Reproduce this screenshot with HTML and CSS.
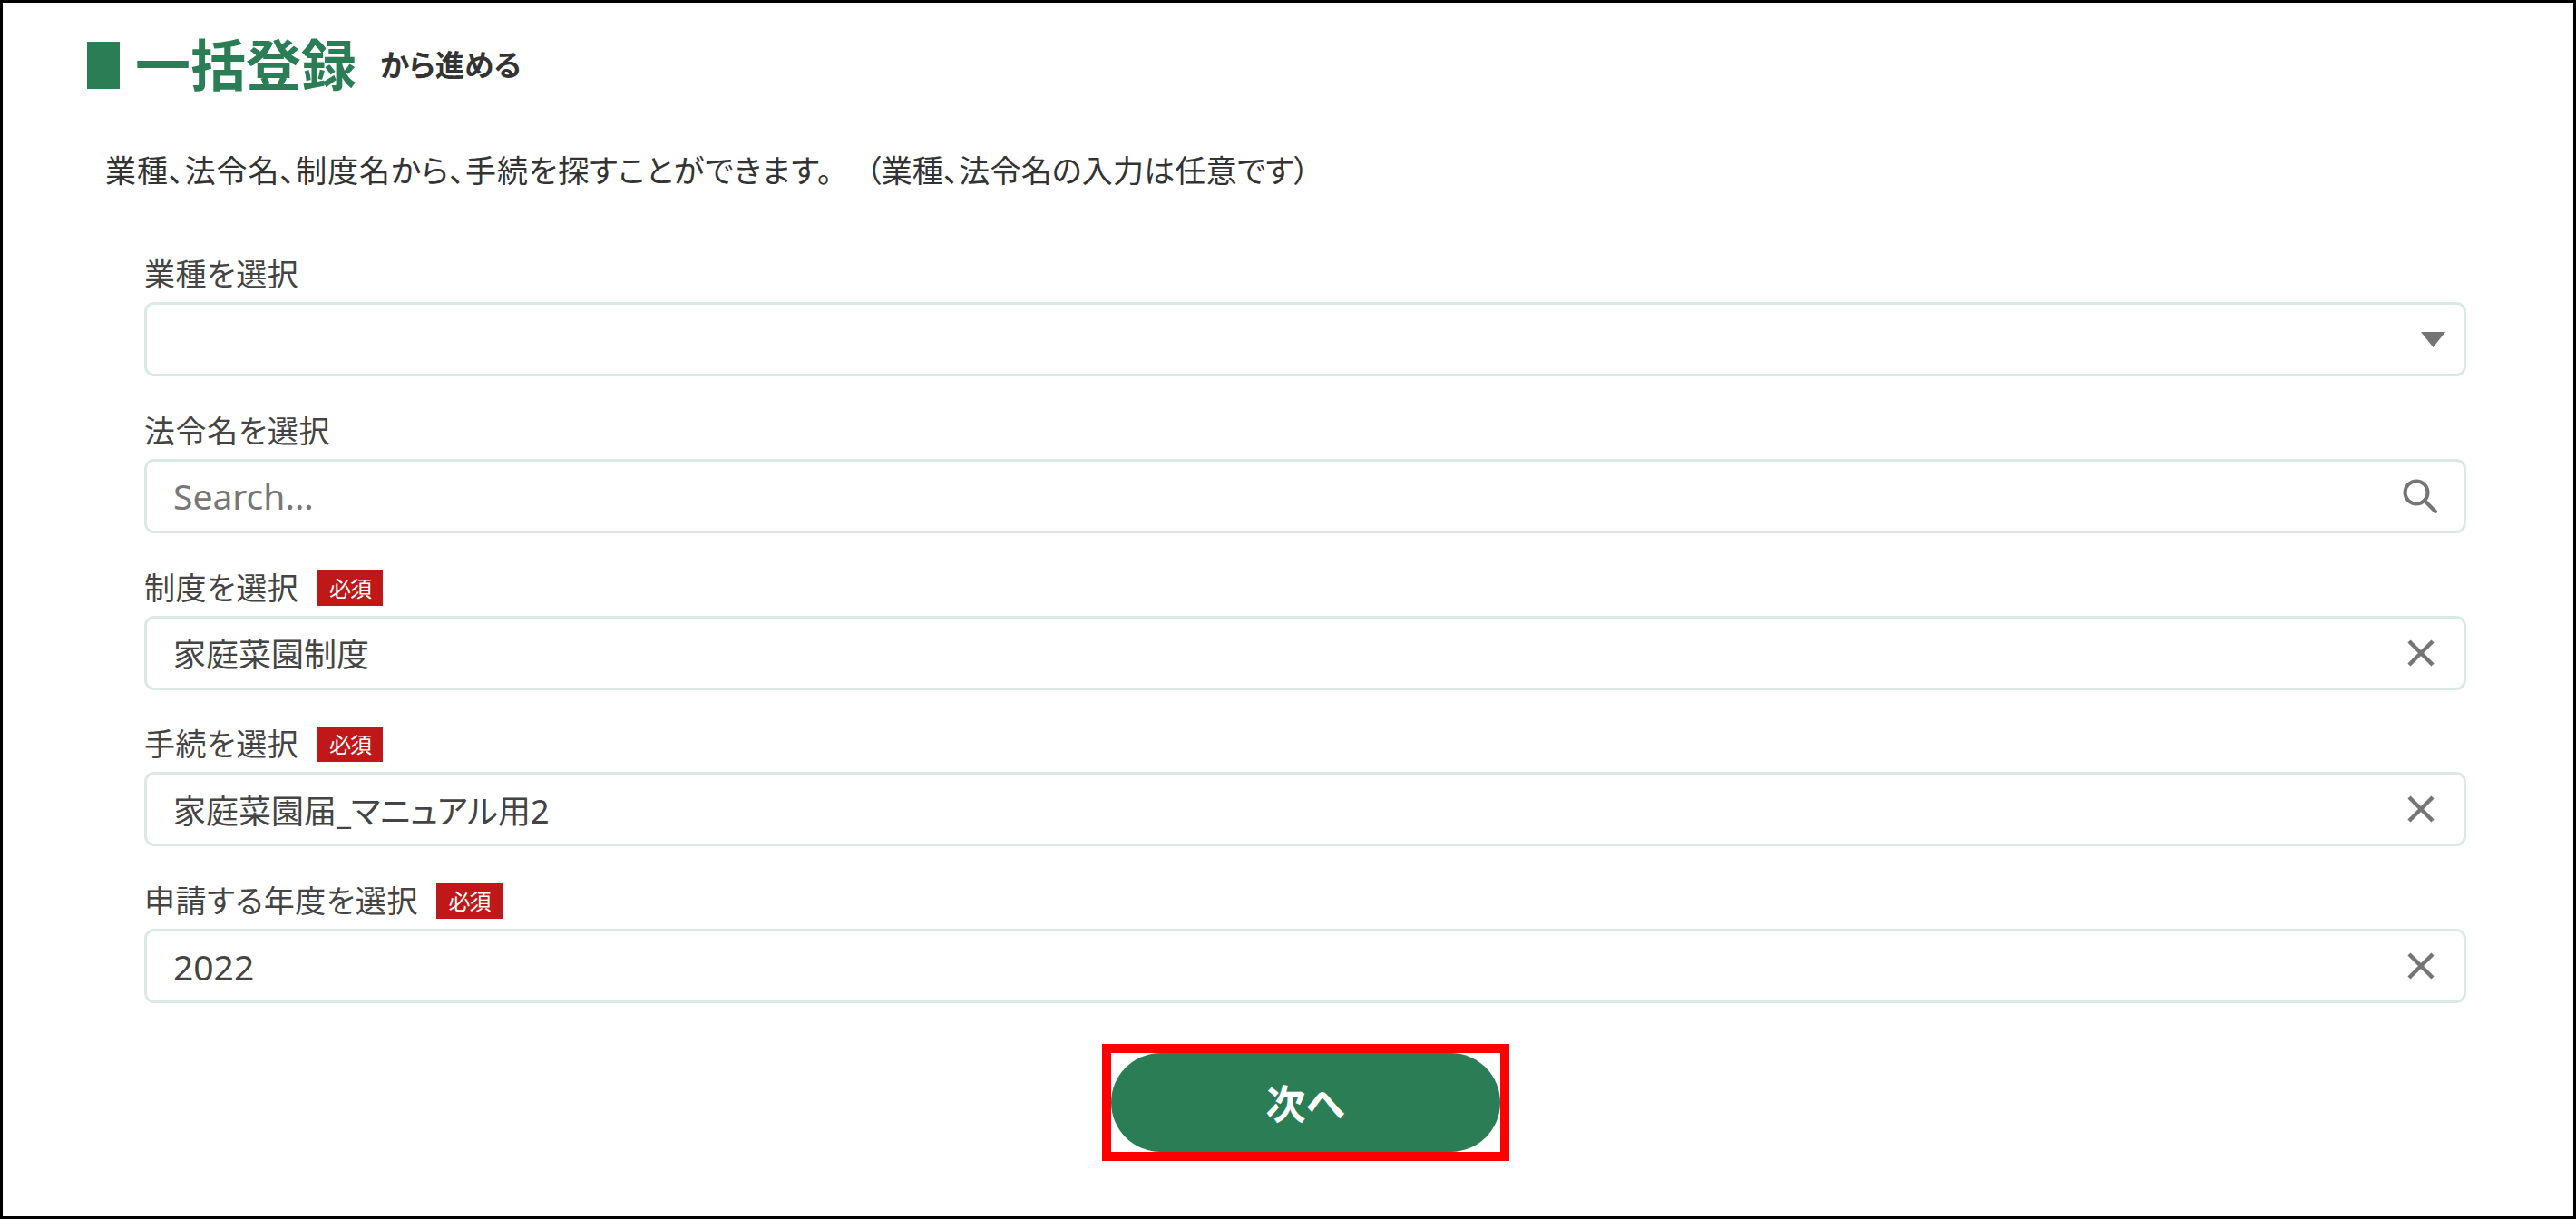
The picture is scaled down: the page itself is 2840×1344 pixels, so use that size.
FILE: index.html
```html
<!DOCTYPE html>
<html lang="ja">
<head>
    <meta charset="UTF-8">
    <meta name="viewport" content="width=device-width, initial-scale=1.0">
    <title>一括登録</title>
    <link rel="stylesheet" href="styles.css">
</head>
<body>
    <div class="frame">
        <div class="heading">
            <span class="heading-bar"></span>
            <h1>一括登録</h1>
            <span class="heading-sub">から進める</span>
        </div>
        <p class="lead">業種、法令名、制度名から、手続を探すことができます。<span class="lead-note">（業種、法令名の入力は任意です）</span></p>

        <form class="form">
            <div class="field">
                <div class="label-row"><label for="gyoshu">業種を選択</label></div>
                <div class="input-box">
                    <input id="gyoshu" type="text" readonly>
                    <svg class="icon icon-arrow" viewBox="0 0 27 17"><path d="M0 0H27L13.5 17Z"/></svg>
                </div>
            </div>
            <div class="field">
                <div class="label-row"><label for="horei">法令名を選択</label></div>
                <div class="input-box">
                    <input id="horei" class="input-latin" type="text" placeholder="Search...">
                    <svg class="icon icon-search" viewBox="0 0 38 38"><circle cx="15" cy="15" r="12.5"/><path d="M24 24L36 36"/></svg>
                </div>
            </div>
            <div class="field">
                <div class="label-row"><label for="seido">制度を選択</label><span class="required">必須</span></div>
                <div class="input-box">
                    <input id="seido" type="text" value="家庭菜園制度">
                    <svg class="icon icon-clear" viewBox="0 0 30 30"><path d="M2 2L28 28M28 2L2 28"/></svg>
                </div>
            </div>
            <div class="field">
                <div class="label-row"><label for="tetsuzuki">手続を選択</label><span class="required">必須</span></div>
                <div class="input-box">
                    <input id="tetsuzuki" type="text" value="家庭菜園届_マニュアル用2">
                    <svg class="icon icon-clear" viewBox="0 0 30 30"><path d="M2 2L28 28M28 2L2 28"/></svg>
                </div>
            </div>
            <div class="field">
                <div class="label-row"><label for="nendo">申請する年度を選択</label><span class="required">必須</span></div>
                <div class="input-box">
                    <input id="nendo" class="input-latin" type="text" value="2022">
                    <svg class="icon icon-clear" viewBox="0 0 30 30"><path d="M2 2L28 28M28 2L2 28"/></svg>
                </div>
            </div>

            <div class="actions">
                <div class="highlight">
                    <button type="button" class="button">次へ</button>
                </div>
            </div>
        </form>
    </div>
</body>
</html>
```

FILE: styles.css
```css
* {
    box-sizing: border-box;
}

body {
    margin: 0;
    background-color: white;
    font-family: "Noto Sans", "Noto Sans CJK JP", sans-serif;
    color: #333;
}

.frame {
    height: 1344px;
    border: 3px solid #000;
    padding: 43px 118px 0 93px;
    overflow: hidden;
}

.heading {
    display: flex;
    align-items: center;
    height: 52px;
}

.heading-bar {
    width: 36px;
    height: 52px;
    background-color: #2b7d55;
    margin-right: 17px;
}

.heading h1 {
    margin: 0;
    font-size: 61px;
    font-weight: 700;
    color: #2b7d55;
    line-height: 50px;
}

.heading-sub {
    margin-left: 26px;
    font-size: 32.5px;
    font-weight: 700;
    font-feature-settings: "palt";
    color: #333;
    line-height: 50px;
}

.lead {
    margin: 66px 0 0 20px;
    font-size: 34px;
    line-height: 48px;
    letter-spacing: 0.9px;
    font-feature-settings: "palt";
    white-space: nowrap;
}

.lead-note {
    margin-left: 36px;
    letter-spacing: 0.2px;
}

.form {
    margin: 71px 0 0 63px;
    display: flex;
    flex-direction: column;
    gap: 40.75px;
}

.label-row {
    display: flex;
    align-items: center;
    gap: 20px;
    height: 39px;
    margin-bottom: 11px;
}

.label-row label {
    font-size: 34px;
    line-height: 39px;
    letter-spacing: 0.6px;
    font-feature-settings: "palt";
    color: #444;
}

.required {
    width: 73px;
    height: 39px;
    background-color: #c01818;
    color: white;
    font-size: 24px;
    line-height: 39px;
    text-align: center;
    letter-spacing: -1px;
}

.input-box {
    display: flex;
    align-items: center;
    height: 82px;
    border: 3px solid #dbe9e4;
    border-radius: 11px;
    padding: 0 32px 0 29px;
}

.input-box input {
    flex: 1;
    min-width: 0;
    border: none;
    outline: none;
    padding: 0;
    background: none;
    font-family: inherit;
    font-size: 36px;
    font-feature-settings: "palt";
    color: #444;
}

.input-box .input-latin {
    font-size: 39px;
}

.input-box input::placeholder {
    color: #777;
    opacity: 1;
}

.icon {
    flex-shrink: 0;
}

.icon-arrow {
    width: 27px;
    height: 17px;
    margin-right: -12px;
    fill: #757575;
}

.icon-search {
    width: 38px;
    height: 38px;
    margin-right: -3px;
    fill: none;
    stroke: #757575;
    stroke-width: 4;
    stroke-linecap: round;
}

.icon-clear {
    width: 30px;
    height: 30px;
    margin-right: 0;
    fill: none;
    stroke: #757575;
    stroke-width: 4.5;
}

.actions {
    display: flex;
    justify-content: center;
    margin-top: 4px;
}

.highlight {
    border: 10px solid #f00;
    height: 129px;
}

.button {
    display: block;
    width: 429px;
    height: 109px;
    border: none;
    border-radius: 55px;
    background-color: #2b7d55;
    color: white;
    font-family: inherit;
    font-size: 44px;
    font-weight: 700;
    font-feature-settings: "palt";
    cursor: pointer;
}
```
